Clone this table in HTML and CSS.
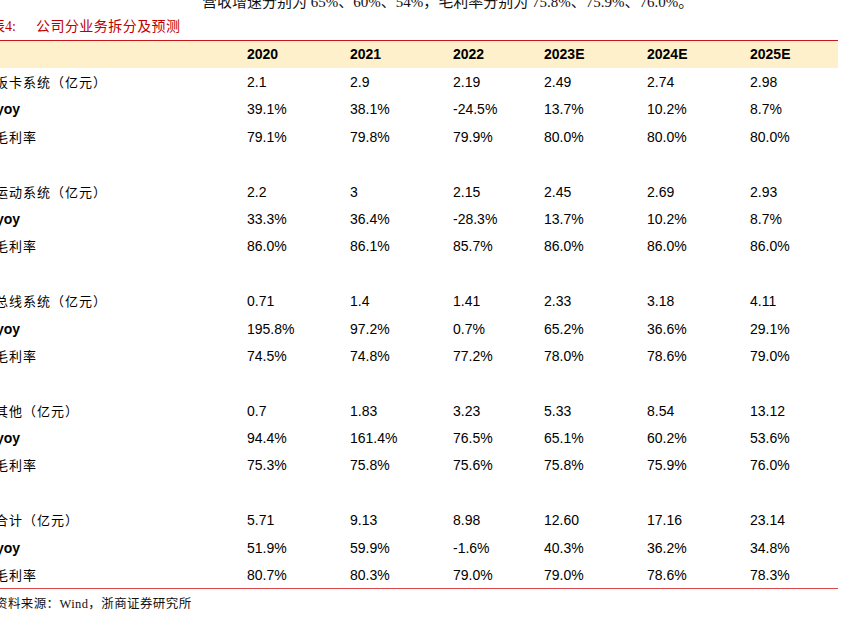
FILE: index.html
```html
<!DOCTYPE html>
<html lang="zh">
<head>
<meta charset="utf-8">
<link rel="stylesheet" href="styles.css">
</head>
<body>
<div class="page">
  <p class="lead">营收增速分别为 65%、60%、54%，毛利率分别为 75.8%、75.9%、76.0%。</p>
  <p class="caption"><span class="cap-no">表4:</span><span class="cap-text">公司分业务拆分及预测</span></p>
  <div class="table">
    <div class="row head"><div class="lbl"></div><div>2020</div><div>2021</div><div>2022</div><div>2023E</div><div>2024E</div><div>2025E</div><div></div></div>

    <div class="row"><div class="lbl cn">板卡系统（亿元）</div><div>2.1</div><div>2.9</div><div>2.19</div><div>2.49</div><div>2.74</div><div>2.98</div><div></div></div>
    <div class="row"><div class="lbl b">yoy</div><div>39.1%</div><div>38.1%</div><div>-24.5%</div><div>13.7%</div><div>10.2%</div><div>8.7%</div><div></div></div>
    <div class="row"><div class="lbl cn">毛利率</div><div>79.1%</div><div>79.8%</div><div>79.9%</div><div>80.0%</div><div>80.0%</div><div>80.0%</div><div></div></div>
    <div class="row"></div>

    <div class="row"><div class="lbl cn">运动系统（亿元）</div><div>2.2</div><div>3</div><div>2.15</div><div>2.45</div><div>2.69</div><div>2.93</div><div></div></div>
    <div class="row"><div class="lbl b">yoy</div><div>33.3%</div><div>36.4%</div><div>-28.3%</div><div>13.7%</div><div>10.2%</div><div>8.7%</div><div></div></div>
    <div class="row"><div class="lbl cn">毛利率</div><div>86.0%</div><div>86.1%</div><div>85.7%</div><div>86.0%</div><div>86.0%</div><div>86.0%</div><div></div></div>
    <div class="row"></div>

    <div class="row"><div class="lbl cn">总线系统（亿元）</div><div>0.71</div><div>1.4</div><div>1.41</div><div>2.33</div><div>3.18</div><div>4.11</div><div></div></div>
    <div class="row"><div class="lbl b">yoy</div><div>195.8%</div><div>97.2%</div><div>0.7%</div><div>65.2%</div><div>36.6%</div><div>29.1%</div><div></div></div>
    <div class="row"><div class="lbl cn">毛利率</div><div>74.5%</div><div>74.8%</div><div>77.2%</div><div>78.0%</div><div>78.6%</div><div>79.0%</div><div></div></div>
    <div class="row"></div>

    <div class="row"><div class="lbl cn">其他（亿元）</div><div>0.7</div><div>1.83</div><div>3.23</div><div>5.33</div><div>8.54</div><div>13.12</div><div></div></div>
    <div class="row"><div class="lbl b">yoy</div><div>94.4%</div><div>161.4%</div><div>76.5%</div><div>65.1%</div><div>60.2%</div><div>53.6%</div><div></div></div>
    <div class="row"><div class="lbl cn">毛利率</div><div>75.3%</div><div>75.8%</div><div>75.6%</div><div>75.8%</div><div>75.9%</div><div>76.0%</div><div></div></div>
    <div class="row"></div>

    <div class="row"><div class="lbl cn">合计（亿元）</div><div>5.71</div><div>9.13</div><div>8.98</div><div>12.60</div><div>17.16</div><div>23.14</div><div></div></div>
    <div class="row"><div class="lbl b">yoy</div><div>51.9%</div><div>59.9%</div><div>-1.6%</div><div>40.3%</div><div>36.2%</div><div>34.8%</div><div></div></div>
    <div class="row last"><div class="lbl cn">毛利率</div><div>80.7%</div><div>80.3%</div><div>79.0%</div><div>79.0%</div><div>78.6%</div><div>78.3%</div><div></div></div>
  </div>
  <p class="source">资料来源：Wind，浙商证券研究所</p>
</div>
</body>
</html>
```

FILE: styles.css
```css
html, body {
  margin: 0;
  padding: 0;
  background: #ffffff;
}
body {
  width: 865px;
  height: 622px;
  overflow: hidden;
  color: #000;
  font-family: "Liberation Sans", Arial, sans-serif;
}
.page {
  width: 865px;
}
.lead {
  margin: -7px 0 0 202px;
  height: 19px;
  line-height: 19px;
  font-family: "Liberation Serif", "Noto Sans CJK SC", serif;
  font-size: 15px;
  white-space: nowrap;
  color: #111;
}
.caption {
  margin: 6px 0 0 -9px;
  height: 18px;
  line-height: 18px;
  color: #c00000;
  font-family: "Liberation Serif", "Noto Sans CJK SC", serif;
  font-size: 14px;
  white-space: nowrap;
  display: flex;
}
.cap-no {
  width: 45px;
}
.cap-text {
  letter-spacing: 0.45px;
}
.table {
  margin-top: 4px;
  width: 838px;
  border-top: 1px solid #c8161d;
}
.row {
  box-sizing: border-box;
  display: grid;
  grid-template-columns: 247px 103px 103px 91px 103px 103px 88px;
  height: 27.4px;
  padding-top: 6px;
  align-items: start;
  font-size: 14px;
  line-height: 16px;
  white-space: nowrap;
}
.row.head {
  height: 27px;
  padding-top: 5px;
  background: #fff0cc;
  font-weight: bold;
}
.row.last {
  height: 28.4px;
  border-bottom: 1px solid #d9474a;
}
.lbl {
  margin-left: -4px;
}
.lbl.cn {
  margin-left: -5px;
  font-family: "Noto Sans CJK SC", sans-serif;
  font-size: 13px;
  line-height: 16px;
  letter-spacing: 1px;
}
.lbl.b {
  font-weight: bold;
}
.source {
  margin: 6px 0 0 -5px;
  font-family: "Liberation Serif", "Noto Sans CJK SC", serif;
  font-size: 12.5px;
  letter-spacing: 0.4px;
  line-height: 18px;
  color: #111;
}
```
